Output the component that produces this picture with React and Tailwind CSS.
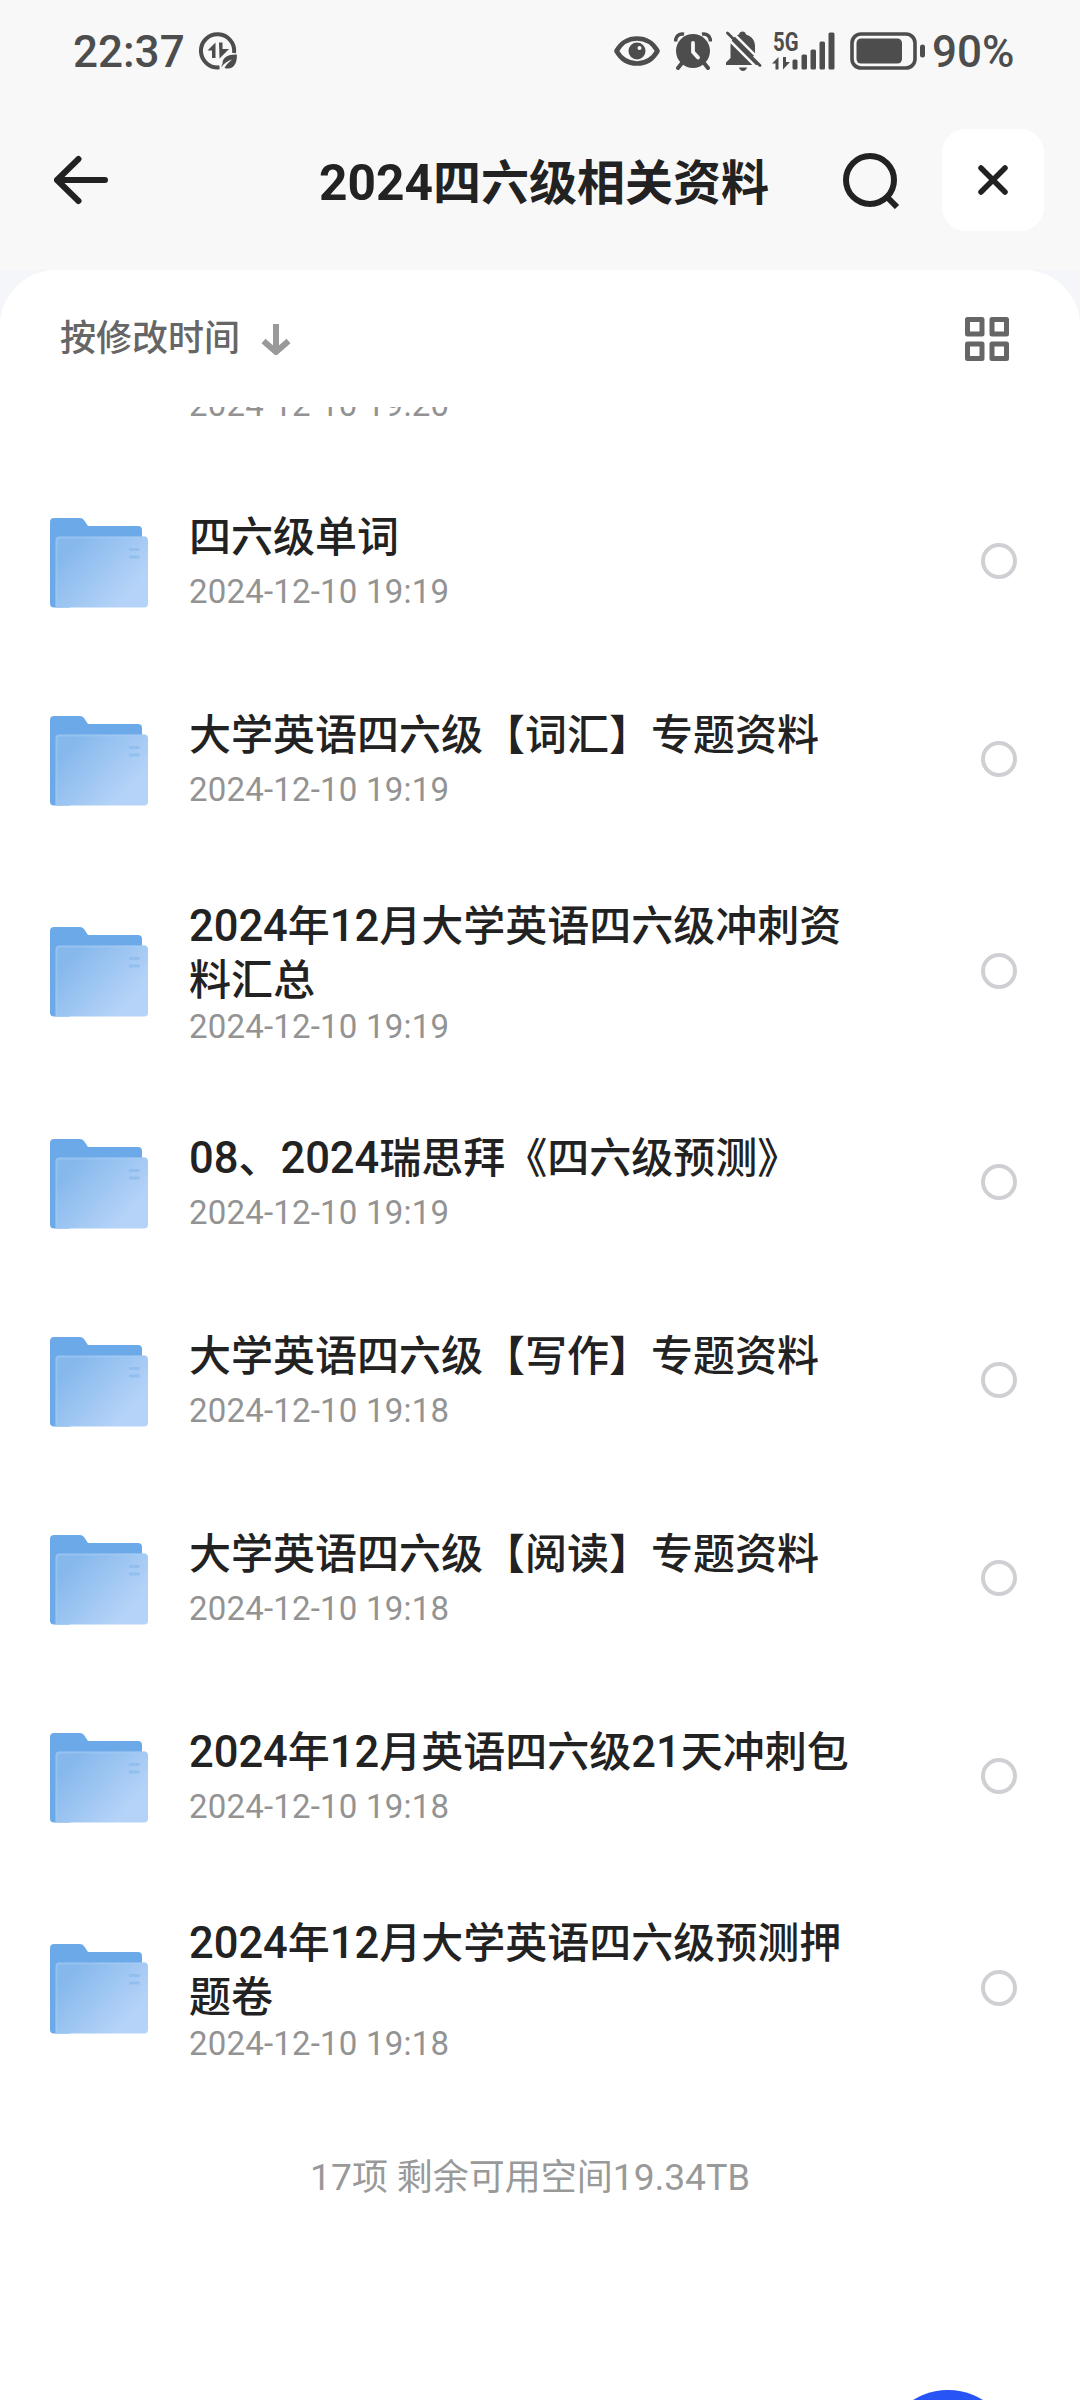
import React from 'react';

const files = [
  { name: '四六级单词', date: '2024-12-10 19:19' },
  { name: '大学英语四六级【词汇】专题资料', date: '2024-12-10 19:19' },
  { name: '2024年12月大学英语四六级冲刺资料汇总', date: '2024-12-10 19:19', tall: true },
  { name: '08、2024瑞思拜《四六级预测》', date: '2024-12-10 19:19' },
  { name: '大学英语四六级【写作】专题资料', date: '2024-12-10 19:18' },
  { name: '大学英语四六级【阅读】专题资料', date: '2024-12-10 19:18' },
  { name: '2024年12月英语四六级21天冲刺包', date: '2024-12-10 19:18' },
  { name: '2024年12月大学英语四六级预测押题卷', date: '2024-12-10 19:18', tall: true },
];

// Digits are set slightly larger than the Chinese glyphs around them
const MixedText = ({ children }) =>
  children.split(/(\d+)/).map((part, i) =>
    /^\d+$/.test(part) ? (
      <span key={i} className="text-[1.035em] leading-none">{part}</span>
    ) : (
      part
    )
  );

const DataSaverIcon = () => (
  <svg width="38" height="38" viewBox="0 0 38 38" fill="none">
    <path d="M35 21A16.6 16.6 0 1 0 20.5 35.3" stroke="#4d4d4d" strokeWidth="4" />
    <path d="M8.500 18.500 16.500 10.500V26H13V18.500ZM20 10.500H23.500V17H30L20.500 26.500Z" fill="#4d4d4d" />
    <path d="M37.800 22.500C30 22 23.500 25 23.500 31.500L22 35.500C25 31.500 28.500 29 33 27.500C29.500 30.500 27 33 25.500 36C33 38.500 38.500 33 37.800 22.500Z" fill="#4d4d4d" />
  </svg>
);

const EyeIcon = () => (
  <svg width="46" height="30" viewBox="0 0 46 30" fill="none">
    <path d="M2.500 15C7 7 14.500 2.500 23 2.500S39 7 43.500 15C39 23 31.500 27.500 23 27.500S7 23 2.500 15Z" stroke="#4d4d4d" strokeWidth="4.600" strokeLinejoin="round" />
    <circle cx="23" cy="15" r="8.500" fill="#4d4d4d" />
    <circle cx="25.500" cy="12" r="2" fill="#f8f8f8" />
  </svg>
);

const AlarmIcon = () => (
  <svg width="38" height="38" viewBox="0 0 38 38" fill="none">
    <circle cx="19" cy="19" r="17" fill="#4d4d4d" />
    <path d="M1.500 9.500C1.500 4 5.500 1 10 2.200M28 2.200C32.500 1 36.500 4 36.500 9.500" stroke="#4d4d4d" strokeWidth="3.500" />
    <path d="M8 31 4 36M30 31 34 36" stroke="#4d4d4d" strokeWidth="4" strokeLinecap="round" />
    <path d="M19 11V20L24 25.500" stroke="#f8f8f8" strokeWidth="3.800" strokeLinecap="round" />
  </svg>
);

const BellOffIcon = () => (
  <svg width="36" height="40" viewBox="0 0 36 40" fill="none">
    <path d="M0 34V31.500L4.500 27V15C4.500 9 9 4.500 13 3.500C13.500 -0.500 19.500 -0.500 20 3.500C25.500 5 29 9.500 29 15V27L32 31V34ZM13 36.500H21C20 41 14 41 13 36.500Z" fill="#4d4d4d" />
    <path d="M4.500 -0.500 37.500 32.500M-2 3.800 30 35.800" stroke="#f8f8f8" strokeWidth="2.600" />
    <path d="M30 24 36 30V36L26 26Z" fill="#f8f8f8" />
    <path d="M1.500 2 34 34.500" stroke="#4d4d4d" strokeWidth="2.800" strokeLinecap="round" />
  </svg>
);

const SignalIcon = () => (
  <svg className="overflow-visible" width="64" height="38" viewBox="0 0 64 38" fill="#4d4d4d">
    <text x="1" y="18.800" fontSize="25.500" fontWeight="700" textLength="25.500" lengthAdjust="spacingAndGlyphs">5G</text>
    <path d="M0 31.500 6.500 25V37.500H3.500V31.500ZM11 25H14V30H18L11 37.500Z" />
    <rect x="20.500" y="27.500" width="5" height="10" rx="1.500" />
    <rect x="29.500" y="22.500" width="5.500" height="15" rx="1.500" />
    <rect x="38.500" y="17.500" width="5.500" height="20" rx="1.500" />
    <rect x="47.500" y="9.500" width="5.500" height="28" rx="1.500" />
    <rect x="56.500" y="0.500" width="6" height="37" rx="1.500" />
  </svg>
);

const BatteryIcon = () => (
  <svg width="76" height="38" viewBox="0 0 76 38" fill="none">
    <rect x="2" y="2" width="63" height="34" rx="9" stroke="#4d4d4d" strokeWidth="3.600" />
    <rect x="6.500" y="6.500" width="45.500" height="25" rx="4.500" fill="#4d4d4d" />
    <rect x="70" y="12.500" width="5" height="13" rx="2.500" fill="#4d4d4d" />
  </svg>
);

const FolderIcon = () => (
  <svg className="mt-[3px]" width="98" height="90" viewBox="0 0 98 90" fill="none">
    <defs>
      <linearGradient id="front" x1="18" y1="32" x2="72" y2="82" gradientUnits="userSpaceOnUse">
        <stop stopColor="#86b8ec" />
        <stop offset="1" stopColor="#b5d3f8" />
      </linearGradient>
    </defs>
    <path d="M0 4Q0 0 4 0H30Q32.500 0 34 2L38 8H88Q92 8 92 12V40H20V89.500H4Q0 89.500 0 85.500Z" fill="#6ca9e9" />
    <path d="M5.500 22Q5.500 18.500 9 18.500H94Q98 18.500 98 22.500V85.500Q98 89.500 94 89.500H5.500Z" fill="url(#front)" />
    <path d="M6.500 88.500V22.500Q6.500 19.500 9.500 19.500H96" stroke="#a6ccf5" strokeWidth="2" opacity="0.500" />
    <path d="M79 31.500H89.500M79 39H89.500" stroke="#92bfee" strokeWidth="3.200" />
  </svg>
);

const StatusBar = () => (
  <div className="flex h-[102px] items-center pl-[73px] pr-[66px] text-[44px] font-medium text-[#4d4d4d]">
    <span className="mt-0.5 w-[126px]">22:37</span>
    <DataSaverIcon />
    <div className="ml-auto flex items-center">
      <EyeIcon />
      <span className="ml-[14px]"><AlarmIcon /></span>
      <span className="ml-[14px]"><BellOffIcon /></span>
      <span className="ml-[10px]"><SignalIcon /></span>
      <span className="ml-[14px]"><BatteryIcon /></span>
      <span className="ml-[6px] mt-0.5 w-[82px] whitespace-nowrap">90%</span>
    </div>
  </div>
);

const Header = () => (
  <header className="flex h-[156px] items-center pl-[54px] pr-9">
    <svg width="56" height="50" viewBox="0 0 56 50" fill="none" stroke="#222" strokeWidth="6" strokeLinecap="round" strokeLinejoin="round">
      <path d="M51 25H3M24.500 4 3 25 24.500 46" />
    </svg>
    <h1 className="ml-[209px] mt-2 w-[524px] whitespace-nowrap text-[48px] font-bold text-[#222]">
      <MixedText>2024四六级相关资料</MixedText>
    </h1>
    <svg width="58" height="58" viewBox="0 0 58 58" fill="none" stroke="#222" strokeWidth="6">
      <circle cx="27" cy="29" r="24" />
      <path d="M44.500 46.500 54 56" />
    </svg>
    <button className="ml-auto flex h-[102px] w-[102px] items-center justify-center rounded-3xl bg-white">
      <svg width="32" height="32" viewBox="0 0 32 32" fill="none" stroke="#222" strokeWidth="5.500" strokeLinecap="round">
        <path d="M4 4 28 28M28 4 4 28" />
      </svg>
    </button>
  </header>
);

const Toolbar = () => (
  <div className="flex h-[137px] items-center pl-[60px] pr-[71px]">
    <span className="mt-px text-[36px] font-medium text-[#666]">按修改时间</span>
    <svg className="ml-[21px] mt-0.5" width="30" height="32" viewBox="0 0 30 32" fill="none" stroke="#999" strokeWidth="6">
      <path d="M15 0V27M2.500 17 15 28 27.500 17" strokeLinejoin="round" />
    </svg>
    <svg className="ml-auto" width="44" height="44" viewBox="0 0 44 44" fill="none" stroke="#666" strokeWidth="5" strokeLinejoin="round">
      <rect x="2.500" y="2.500" width="14.500" height="14.500" />
      <rect x="27" y="2.500" width="14.500" height="14.500" />
      <rect x="2.500" y="27" width="14.500" height="14.500" />
      <rect x="27" y="27" width="14.500" height="14.500" />
    </svg>
  </div>
);

const FileDate = ({ children }) => (
  <p className="text-[33px] leading-[38px] tracking-[0.2px] text-[#939393]">{children}</p>
);

const FileRow = ({ file }) => (
  <li className={`flex items-center pl-[50px] pr-[63px] ${file.tall ? 'h-[225px]' : 'h-[198px]'}`}>
    <FolderIcon />
    <div className={`ml-[41px] flex w-[670px] flex-col ${file.tall ? 'pt-[5px]' : 'gap-2 pb-px'}`}>
      <p className="text-[42px] font-medium leading-[54px] text-[#222]">
        <MixedText>{file.name}</MixedText>
      </p>
      <FileDate>{file.date}</FileDate>
    </div>
    <span className="ml-auto h-9 w-9 rounded-full border-4 border-[#cfd0d4]" />
  </li>
);

const App = () => {
  return (
    <div className="relative h-[2400px] w-[1080px] overflow-hidden bg-[#f8f8f8] font-['Roboto','Noto_Sans_CJK_SC',sans-serif]">
      <StatusBar />
      <Header />
      <div className="h-3 bg-[#f8f8f8]" />
      <div className="h-full bg-[#f4f6f9]">
        <main className="h-full rounded-t-[56px] bg-white">
          <Toolbar />
          {/* Bottom edge of the row scrolled under the toolbar */}
          <div className="flex h-[55px] flex-col overflow-hidden pl-[189px]">
            <div className="-mt-[21px]">
              <FileDate>2024-12-10 19:20</FileDate>
            </div>
          </div>
          <ul>
            {files.map((file) => (
              <FileRow key={file.name} file={file} />
            ))}
          </ul>
          <p className="pl-[310px] pt-[52px] text-[36px] leading-[52px] text-[#999]">
            <MixedText>17项 剩余可用空间19.34TB</MixedText>
          </p>
        </main>
      </div>
      <button className="absolute left-[882px] top-[2390px] h-[132px] w-[132px] rounded-full bg-[#2754f5]" />
    </div>
  );
};

export default App;
